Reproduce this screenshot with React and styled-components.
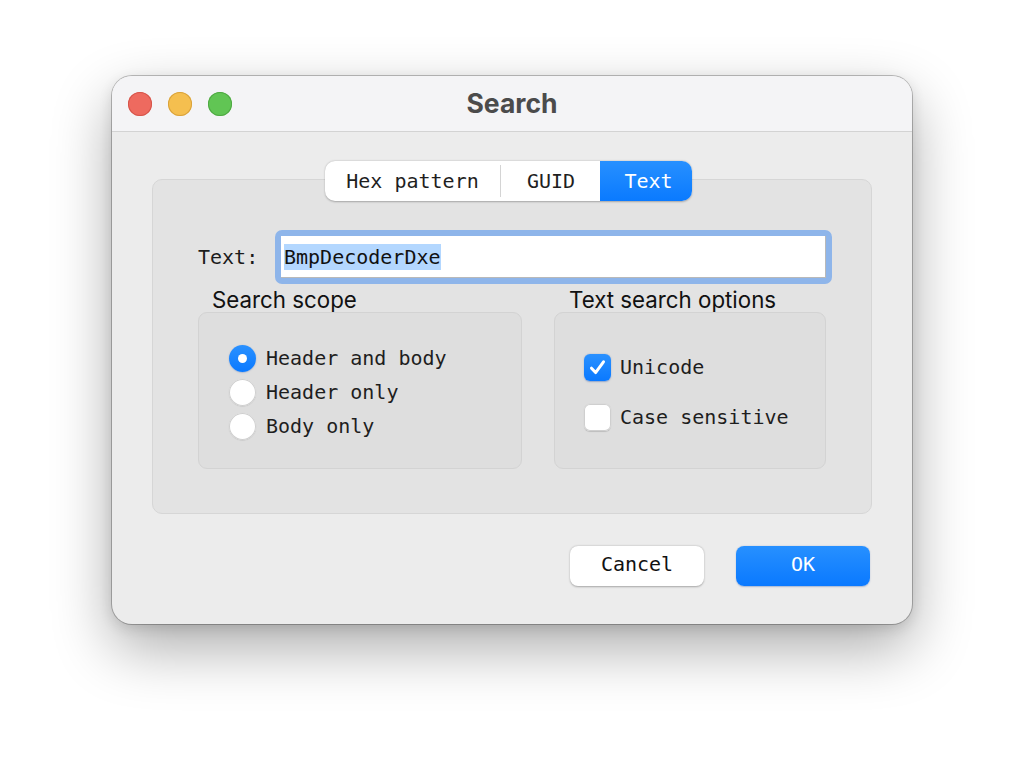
import React from 'react';
import styled, { createGlobalStyle } from 'styled-components';

const GlobalStyle = createGlobalStyle`
  html, body {
    margin: 0;
    padding: 0;
    background: #ffffff;
  }
  * { box-sizing: border-box; }
`;

const mono = `"DejaVu Sans Mono", "Liberation Mono", monospace`;
const sans = `Inter, "Noto Sans", "Liberation Sans", sans-serif`;

const Page = styled.div`
  width: 1024px;
  height: 772px;
  padding: 76px 0 0 112px;
  overflow: hidden;
`;

const Window = styled.div`
  width: 800px;
  height: 548px;
  border-radius: 20px;
  background: #ececec;
  box-shadow: 0 0 0 1px rgba(0, 0, 0, 0.24), 0 24px 60px rgba(0, 0, 0, 0.33),
    0 4px 14px rgba(0, 0, 0, 0.12);
  overflow: hidden;
  display: flex;
  flex-direction: column;
`;

const TitleBar = styled.div`
  height: 56px;
  flex: none;
  background: #f4f4f6;
  border-bottom: 1px solid #d3d3d3;
  display: flex;
  align-items: center;
  padding-left: 16px;
  position: relative;
`;

const Lights = styled.div`
  display: flex;
  gap: 16px;
`;

const Light = styled.span`
  width: 24px;
  height: 24px;
  border-radius: 50%;
  background: ${p => p.color};
  box-shadow: inset 0 0 0 1px ${p => p.edge};
`;

const Title = styled.div`
  position: absolute;
  left: 0;
  right: 0;
  top: 0;
  bottom: 2px;
  display: flex;
  align-items: center;
  justify-content: center;
  font-family: ${sans};
  font-weight: 700;
  font-size: 26.5px;
  color: #4b4b4b;
  pointer-events: none;
`;

const Body = styled.div`
  flex: 1;
  padding: 29px 40px 38px;
  display: flex;
  flex-direction: column;
`;

const Segmented = styled.div`
  align-self: center;
  margin-left: -7px;
  display: flex;
  height: 40px;
  margin-bottom: -22px;
  position: relative;
  z-index: 1;
  background: #ffffff;
  border-radius: 10px;
  box-shadow: 0 0.5px 2px rgba(0, 0, 0, 0.28);
`;

const Segment = styled.div`
  width: ${p => p.w}px;
  display: flex;
  align-items: center;
  justify-content: center;
  padding-left: ${p => p.shift || 0}px;
  font-family: ${mono};
  font-size: 20px;
  color: ${p => (p.active ? '#ffffff' : '#1f1f1f')};
  background: ${p => (p.active ? 'linear-gradient(#2790ff, #0a7aff)' : 'transparent')};
  border-radius: ${p => (p.active ? '0 10px 10px 0' : '0')};
  position: relative;
  &::before {
    content: '';
    display: ${p => (p.divider ? 'block' : 'none')};
    position: absolute;
    left: 0;
    top: 4px;
    bottom: 4px;
    width: 1px;
    background: #d4d4d4;
  }
`;

const Panel = styled.div`
  height: 335px;
  background: #e3e3e3;
  border: 1px solid #d6d6d6;
  border-radius: 10px;
  padding: 50px 39px 0 45px;
  display: flex;
  flex-direction: column;
`;

const FieldRow = styled.div`
  display: flex;
  align-items: center;
  height: 54px;
`;

const FieldLabel = styled.div`
  width: 77px;
  font-family: ${mono};
  font-size: 20px;
  color: #1c1c1c;
`;

const FocusRing = styled.div`
  flex: 1;
  height: 54px;
  padding: 6px;
  border-radius: 7px;
  background: #8eb5ea;
`;

const Field = styled.div`
  height: 100%;
  background: #ffffff;
  border-right: 1px solid #b9b9b9;
  border-bottom: 1px solid #b9b9b9;
  display: flex;
  align-items: center;
  padding-left: 3px;
  font-family: ${mono};
  font-size: 20px;
  color: #111;
`;

const Selection = styled.span`
  background: #b3d7ff;
  line-height: 26px;
`;

const Groups = styled.div`
  display: flex;
  gap: 32px;
  margin-top: 4px;
  padding-right: 6px;
`;

const Group = styled.div`
  width: ${p => p.w}px;
  display: flex;
  flex-direction: column;
`;

const GroupTitle = styled.div`
  height: 24px;
  line-height: 24px;
  padding-left: ${p => p.indent}px;
  font-family: ${sans};
  font-size: 22.3px;
  color: #111;
`;

const GroupBox = styled.div`
  height: 157px;
  background: #dedede;
  border: 1px solid #d3d3d3;
  border-radius: 9px;
  padding: 3px 0 0 ${p => p.pad}px;
  display: flex;
  flex-direction: column;
  justify-content: center;
  gap: ${p => p.gap}px;
`;

const OptionRow = styled.div`
  height: 34px;
  display: flex;
  align-items: center;
  gap: ${p => p.gap}px;
  font-family: ${mono};
  font-size: 20px;
  color: #1e1e1e;
`;

const Radio = styled.span`
  width: 27px;
  height: 27px;
  border-radius: 50%;
  flex: none;
  display: flex;
  align-items: center;
  justify-content: center;
  background: ${p => (p.checked ? 'linear-gradient(#2a91ff, #0a79ff)' : '#ffffff')};
  box-shadow: ${p =>
    p.checked
      ? '0 0.5px 1.5px rgba(0, 60, 160, 0.35)'
      : 'inset 0 0 0 1px #cfcfcf, 0 0.5px 1px rgba(0, 0, 0, 0.15)'};
  &::after {
    content: '';
    width: 9px;
    height: 9px;
    border-radius: 50%;
    background: #ffffff;
    display: ${p => (p.checked ? 'block' : 'none')};
  }
`;

const Check = styled.span`
  width: 27px;
  height: 27px;
  border-radius: 6px;
  flex: none;
  display: flex;
  align-items: center;
  justify-content: center;
  background: ${p => (p.checked ? 'linear-gradient(#2a91ff, #0a79ff)' : '#ffffff')};
  box-shadow: ${p =>
    p.checked
      ? '0 0.5px 1.5px rgba(0, 60, 160, 0.35)'
      : 'inset 0 0 0 1px #cfcfcf, 0 0.5px 1px rgba(0, 0, 0, 0.15)'};
`;

const Buttons = styled.div`
  display: flex;
  justify-content: flex-end;
  gap: 32px;
  margin-top: 32px;
  padding-right: 2px;
`;

const Button = styled.div`
  width: 134px;
  height: 40px;
  padding-bottom: 4px;
  border-radius: 8px;
  display: flex;
  align-items: center;
  justify-content: center;
  font-family: ${mono};
  font-size: 20px;
  color: ${p => (p.primary ? '#ffffff' : '#111111')};
  background: ${p => (p.primary ? 'linear-gradient(#2790ff, #0a79ff)' : '#ffffff')};
  box-shadow: ${p =>
    p.primary ? '0 0.5px 1.5px rgba(0, 60, 160, 0.3)' : '0 0.5px 2px rgba(0, 0, 0, 0.3)'};
`;

const CheckMark = () => (
  <svg width="19" height="19" viewBox="0 0 19 19">
    <path d="M3.5 10.2 L7.6 14.6 L15.5 3.8" fill="none" stroke="#fff" strokeWidth="3"
      strokeLinecap="round" strokeLinejoin="round" />
  </svg>
);

const App = () => {
  return (
    <Page>
      <GlobalStyle />
      <Window>
        <TitleBar>
          <Lights>
            <Light color="#ee6a5f" edge="#d5554b" />
            <Light color="#f5bf4f" edge="#d9a23b" />
            <Light color="#61c554" edge="#4fa843" />
          </Lights>
          <Title>Search</Title>
        </TitleBar>
        <Body>
          <Segmented>
            <Segment w={175}>Hex pattern</Segment>
            <Segment w={100} divider shift={2}>GUID</Segment>
            <Segment w={92} active shift={5}>Text</Segment>
          </Segmented>
          <Panel>
            <FieldRow>
              <FieldLabel>Text:</FieldLabel>
              <FocusRing>
                <Field>
                  <Selection>BmpDecoderDxe</Selection>
                </Field>
              </FocusRing>
            </FieldRow>
            <Groups>
              <Group w={324}>
                <GroupTitle indent={14}>Search scope</GroupTitle>
                <GroupBox pad={30} gap={0}>
                  <OptionRow gap={10}><Radio checked />Header and body</OptionRow>
                  <OptionRow gap={10}><Radio />Header only</OptionRow>
                  <OptionRow gap={10}><Radio />Body only</OptionRow>
                </GroupBox>
              </Group>
              <Group w={272}>
                <GroupTitle indent={15}>Text search options</GroupTitle>
                <GroupBox pad={29} gap={16}>
                  <OptionRow gap={9}><Check checked><CheckMark /></Check>Unicode</OptionRow>
                  <OptionRow gap={9}><Check />Case sensitive</OptionRow>
                </GroupBox>
              </Group>
            </Groups>
          </Panel>
          <Buttons>
            <Button>Cancel</Button>
            <Button primary>OK</Button>
          </Buttons>
        </Body>
      </Window>
    </Page>
  );
};

export default App;
